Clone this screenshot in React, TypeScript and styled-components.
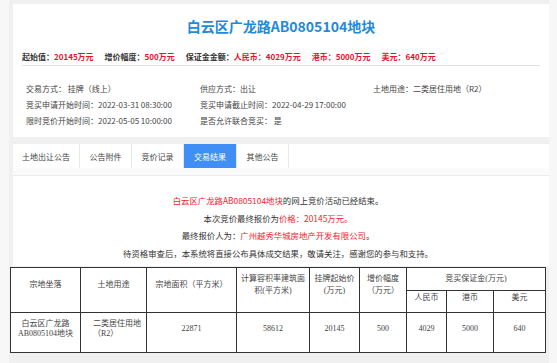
import React from "react";
import styled, { createGlobalStyle } from "styled-components";

const Global = createGlobalStyle`
  html, body { margin: 0; padding: 0; background: #f7f7f7; }
  body { font-family: "Noto Sans CJK SC", "Noto Sans", sans-serif; color: #333; }
  * { box-sizing: border-box; }
`;

const Wrapper = styled.div`
  width: 540px;
  margin-left: 9px;
  padding-top: 4px;
  background: #f0f0f0;
  padding-bottom: 11px;
`;

const Card = styled.div`
  margin-left: 4px;
  background: #fff;
`;

const HeaderCard = styled(Card)`
  padding-bottom: 8px;
`;

const Title = styled.h1`
  margin: 0;
  padding-top: 12px;
  line-height: 20px;
  height: 32px;
  text-align: center;
  font-size: 14px;
  font-weight: 700;
  color: #1f8ad8;
`;

const PriceRow = styled.div`
  margin: 13px 9px 0 9px;
  height: 17px;
  line-height: 16px;
  border-bottom: 1px solid #e2e2e2;
  display: flex;
  gap: 11px;
  font-size: 8px;
  font-weight: 700;
  white-space: nowrap;
`;

const PriceItem = styled.span`
  color: #333;
`;

const Red = styled.span`
  color: #e8112d;
`;

const InfoGrid = styled.div`
  padding: 15px 0 0 13px;
  display: grid;
  grid-template-columns: 174px 173px 1fr;
  font-size: 8px;
  line-height: 16px;
  color: #444;
  white-space: nowrap;
`;

const Gap = styled.div`
  height: 7px;
`;

const TabBar = styled(Card)`
  display: flex;
  height: 24px;
`;

const Tab = styled.div<{ $active?: boolean; $w: number }>`
  width: ${(p) => p.$w}px;
  display: flex;
  align-items: center;
  justify-content: center;
  font-size: 8px;
  color: ${(p) => (p.$active ? "#fff" : "#444")};
  background: ${(p) => (p.$active ? "#3f8ff4" : "#fff")};
  border-right: 1px solid #e8e8e8;
`;

const TabGap = styled(Card)`
  height: 8px;
  background: #fbfbfb;
  border-bottom: 1px solid #ececec;
`;

const Content = styled(Card)`
  padding: 16px 6px 4px 0;
  text-align: center;
  font-size: 8.4px;
  line-height: 17.5px;
  color: #333;
`;

const RedText = styled.span`
  color: #f5222d;
`;

const Table = styled.table`
  margin: 1px 0 0 1px;
  width: 535px;
  border-collapse: collapse;
  table-layout: fixed;
  font-family: "Liberation Serif", "Noto Sans CJK SC", serif;
  font-size: 8px;
  color: #444;
  background: #fff;
`;

const Th = styled.th<{ $pb?: number }>`
  border: 1px solid #333;
  font-weight: 400;
  text-align: center;
  line-height: 12px;
  padding: 0 2px ${(p) => p.$pb ?? 0}px;
`;

const Td = styled.td<{ $left?: boolean }>`
  border: 1px solid #333;
  text-align: ${(p) => (p.$left ? "left" : "center")};
  padding: 0 ${(p) => (p.$left ? "0 8px 12px" : "2px 8px")};
  line-height: 10px;
  height: 40px;
`;

const HeadRow = styled.tr<{ $h: number }>`
  height: ${(p) => p.$h}px;
`;

const cols = [70, 66, 90, 73, 50, 47, 40, 47, 52];

export default function App() {
  return (
    <>
      <Global />
      <Wrapper>
        <HeaderCard>
          <Title>白云区广龙路AB0805104地块</Title>
          <PriceRow>
            <PriceItem>起始值：<Red>20145万元</Red></PriceItem>
            <PriceItem>增价幅度：<Red>500万元</Red></PriceItem>
            <PriceItem>保证金金额：<Red>人民币：4029万元</Red></PriceItem>
            <PriceItem><Red>港币：5000万元</Red></PriceItem>
            <PriceItem><Red>美元：640万元</Red></PriceItem>
          </PriceRow>
          <InfoGrid>
            <span>交易方式： 挂牌（线上）</span>
            <span>供应方式：出让</span>
            <span>土地用途：二类居住用地（R2）</span>
            <span>竞买申请开始时间：2022-03-31 08:30:00</span>
            <span>竞买申请截止时间：2022-04-29 17:00:00</span>
            <span></span>
            <span>限时竞价开始时间：2022-05-05 10:00:00</span>
            <span>是否允许联合竞买： 是</span>
            <span></span>
          </InfoGrid>
        </HeaderCard>
        <Gap />
        <TabBar>
          <Tab $w={67}>土地出让公告</Tab>
          <Tab $w={52}>公告附件</Tab>
          <Tab $w={52}>竞价记录</Tab>
          <Tab $w={53} $active>交易结果</Tab>
          <Tab $w={52}>其他公告</Tab>
        </TabBar>
        <TabGap />
        <Content>
          <div>
            <RedText>白云区广龙路AB0805104地块</RedText>的网上竞价活动已经结束。
          </div>
          <div>
            本次竞价最终报价为<RedText>价格：20145万元。</RedText>
          </div>
          <div>
            最终报价人为：<RedText>广州越秀华城房地产开发有限公司</RedText>。
          </div>
          <div>待资格审查后，本系统将直接公布具体成交结果，敬请关注，感谢您的参与和支持。</div>
        </Content>
        <Table>
          <colgroup>
            {cols.map((w, i) => (
              <col key={i} style={{ width: w }} />
            ))}
          </colgroup>
          <thead>
            <HeadRow $h={23}>
              <Th rowSpan={2} $pb={10}>宗地坐落</Th>
              <Th rowSpan={2} $pb={10}>土地用途</Th>
              <Th rowSpan={2} $pb={10}>宗地面积（平方米）</Th>
              <Th rowSpan={2} $pb={10}>计算容积率建筑面积(平方米)</Th>
              <Th rowSpan={2} $pb={10}>挂牌起始价(万元)</Th>
              <Th rowSpan={2} $pb={10}>增价幅度（万元）</Th>
              <Th colSpan={3}>竞买保证金(万元)</Th>
            </HeadRow>
            <HeadRow $h={22}>
              <Th $pb={8}>人民币</Th>
              <Th $pb={8}>港币</Th>
              <Th $pb={8}>美元</Th>
            </HeadRow>
          </thead>
          <tbody>
            <tr>
              <Td>白云区广龙路<br />AB0805104地块</Td>
              <Td $left>二类居住用地<br />（R2）</Td>
              <Td>22871</Td>
              <Td>58612</Td>
              <Td>20145</Td>
              <Td>500</Td>
              <Td>4029</Td>
              <Td>5000</Td>
              <Td>640</Td>
            </tr>
          </tbody>
        </Table>
      </Wrapper>
    </>
  );
}
